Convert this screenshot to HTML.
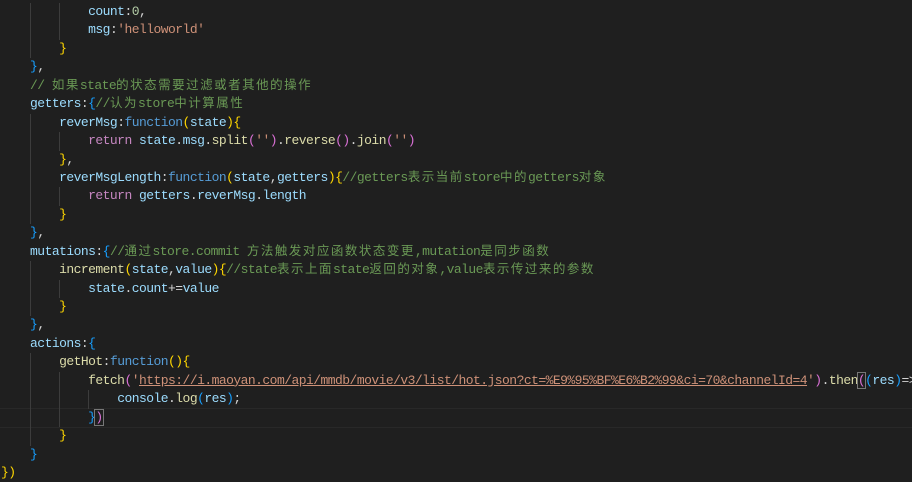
<!DOCTYPE html>
<html><head><meta charset="utf-8"><style>
html,body{margin:0;padding:0;background:#1f1f1f;width:912px;height:470px;overflow:hidden}
.code{margin:0;position:absolute;left:1px;top:3px;font-family:"Liberation Mono","Noto Sans CJK SC",monospace;font-size:13px;letter-spacing:-0.54px;line-height:18.45px;color:#d4d4d4}
.l{height:18.45px;overflow:visible;white-space:pre}
.c{color:#6a9955}.k{color:#9cdcfe}.f{color:#569cd6}.s{color:#ce9178}.g{color:#ffd700}.p{color:#da70d6}.b{color:#179fff}.r{color:#c586c0}.m{color:#dcdcaa}
.z{font-family:"Noto Sans CJK SC",sans-serif;font-size:12.5px;letter-spacing:1.5px;line-height:10px}
.i{display:inline-block;width:29.05px;height:18.45px;vertical-align:top;box-shadow:inset 1px 0 0 #3c3c3c}
.i:first-child{box-shadow:none}
.u{text-decoration:underline;text-decoration-color:#ce9178}
.cur{position:absolute;left:0;top:408px;width:912px;height:18px;border-top:1px solid #282828;border-bottom:1px solid #282828}
.bx{outline:1px solid #777}
</style></head><body>
<div class="cur"></div>
<div class="code">
<div class="l"><span class="i"></span><span class="i"></span><span class="i"></span><span class="k">count</span>:<span style="color:#b5cea8">0</span>,</div>
<div class="l"><span class="i"></span><span class="i"></span><span class="i"></span><span class="k">msg</span>:<span class="s">'helloworld'</span></div>
<div class="l"><span class="i"></span><span class="i"></span><span class="g">}</span></div>
<div class="l"><span class="i"></span><span class="b">}</span>,</div>
<div class="l"><span class="i"></span><span class="c">// <span class="z">如果</span>state<span class="z">的状态需要过滤或者其他的操作</span></span></div>
<div class="l"><span class="i"></span><span class="k">getters</span>:<span class="b">{</span><span class="c">//<span class="z">认为</span>store<span class="z">中计算属性</span></span></div>
<div class="l"><span class="i"></span><span class="i"></span><span class="k">reverMsg</span>:<span class="f">function</span><span class="g">(</span><span class="k">state</span><span class="g">){</span></div>
<div class="l"><span class="i"></span><span class="i"></span><span class="i"></span><span class="r">return</span> <span class="k">state</span>.<span class="k">msg</span>.<span class="m">split</span><span class="p">(</span><span class="s">''</span><span class="p">)</span>.<span class="m">reverse</span><span class="p">()</span>.<span class="m">join</span><span class="p">(</span><span class="s">''</span><span class="p">)</span></div>
<div class="l"><span class="i"></span><span class="i"></span><span class="g">}</span>,</div>
<div class="l"><span class="i"></span><span class="i"></span><span class="k">reverMsgLength</span>:<span class="f">function</span><span class="g">(</span><span class="k">state</span>,<span class="k">getters</span><span class="g">){</span><span class="c">//getters<span class="z">表示当前</span>store<span class="z">中的</span>getters<span class="z">对象</span></span></div>
<div class="l"><span class="i"></span><span class="i"></span><span class="i"></span><span class="r">return</span> <span class="k">getters</span>.<span class="k">reverMsg</span>.<span class="k">length</span></div>
<div class="l"><span class="i"></span><span class="i"></span><span class="g">}</span></div>
<div class="l"><span class="i"></span><span class="b">}</span>,</div>
<div class="l"><span class="i"></span><span class="k">mutations</span>:<span class="b">{</span><span class="c">//<span class="z">通过</span>store.commit <span class="z">方法触发对应函数状态变更</span>,mutation<span class="z">是同步函数</span></span></div>
<div class="l"><span class="i"></span><span class="i"></span><span class="m">increment</span><span class="g">(</span><span class="k">state</span>,<span class="k">value</span><span class="g">){</span><span class="c">//state<span class="z">表示上面</span>state<span class="z">返回的对象</span>,value<span class="z">表示传过来的参数</span></span></div>
<div class="l"><span class="i"></span><span class="i"></span><span class="i"></span><span class="k">state</span>.<span class="k">count</span>+=<span class="k">value</span></div>
<div class="l"><span class="i"></span><span class="i"></span><span class="g">}</span></div>
<div class="l"><span class="i"></span><span class="b">}</span>,</div>
<div class="l"><span class="i"></span><span class="k">actions</span>:<span class="b">{</span></div>
<div class="l"><span class="i"></span><span class="i"></span><span class="m">getHot</span>:<span class="f">function</span><span class="g">(){</span></div>
<div class="l"><span class="i"></span><span class="i"></span><span class="i"></span><span class="m">fetch</span><span class="p">(</span><span class="s">'<span class="u">https://i.maoyan.com/api/mmdb/movie/v3/list/hot.json?ct=%E9%95%BF%E6%B2%99&amp;ci=70&amp;channelId=4</span>'</span><span class="p">)</span>.<span class="m">then</span><span class="p bx">(</span><span class="b">(</span><span class="k">res</span><span class="b">)</span>=&gt;</div>
<div class="l"><span class="i"></span><span class="i"></span><span class="i"></span><span class="i"></span><span class="k">console</span>.<span class="m">log</span><span class="b">(</span><span class="k">res</span><span class="b">)</span>;</div>
<div class="l"><span class="i"></span><span class="i"></span><span class="i"></span><span class="b">}</span><span class="p bx">)</span></div>
<div class="l"><span class="i"></span><span class="i"></span><span class="g">}</span></div>
<div class="l"><span class="i"></span><span class="b">}</span></div>
<div class="l"><span class="g">})</span></div>
</div>
</body></html>
